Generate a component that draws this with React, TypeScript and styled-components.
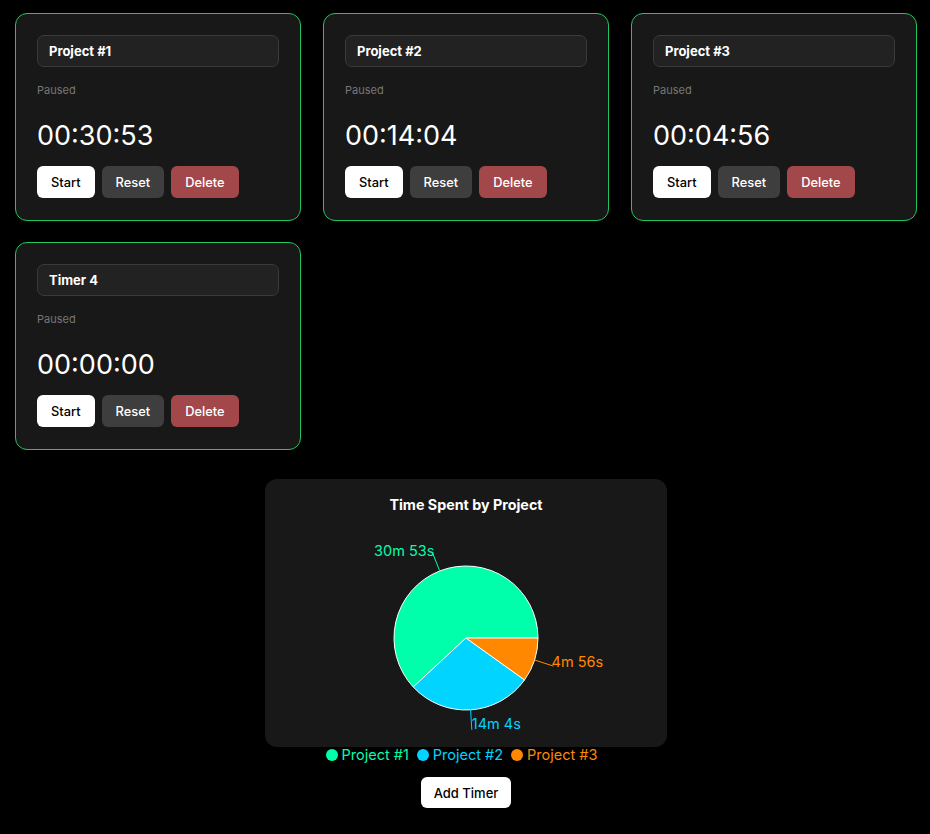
import React from "react";
import styled, { createGlobalStyle } from "styled-components";

const GlobalStyle = createGlobalStyle`
  html, body { margin: 0; padding: 0; background: #000; }
  body { font-family: Inter, "Noto Sans", sans-serif; color: #fff; }
  * { box-sizing: border-box; }
`;

const Page = styled.div`
  padding: 13px 13px 20px 15px;
  display: flex;
  flex-direction: column;
  align-items: center;
`;

const Grid = styled.div`
  width: 100%;
  display: grid;
  grid-template-columns: repeat(3, 286px);
  column-gap: 22px;
  row-gap: 21px;
`;

const Card = styled.div`
  background: #181818;
  border: 1px solid #22c55e;
  border-radius: 12px;
  padding: 21px;
  display: flex;
  flex-direction: column;
  height: 208px;
`;

const NameInput = styled.div`
  height: 32px;
  width: 242px;
  border: 1px solid #3a3a3a;
  border-radius: 7px;
  background: #222;
  padding: 0 11px;
  display: flex;
  align-items: center;
  font-size: 13px;
  font-weight: 700;
  color: #fff;
`;

const Status = styled.div`
  margin-top: 16px;
  font-size: 11px;
  line-height: 14px;
  color: #777;
`;

const Clock = styled.div`
  margin-top: 22px;
  font-size: 27px;
  line-height: 34px;
  color: #fff;
  font-weight: 400;
`;

const Buttons = styled.div`
  margin-top: 13px;
  display: flex;
  gap: 7px;
`;

const Btn = styled.button<{ $variant: "light" | "dark" | "danger" }>`
  height: 32px;
  border: none;
  border-radius: 6px;
  padding: 0 14px;
  font-family: Inter, "Noto Sans", sans-serif;
  font-size: 12.85px;
  font-weight: 500;
  cursor: pointer;
  background: ${(p) =>
    p.$variant === "light" ? "#fff" : p.$variant === "dark" ? "#3e3e3e" : "#a3484a"};
  color: ${(p) => (p.$variant === "light" ? "#000" : "#fff")};
`;

const ChartCard = styled.div`
  margin-top: 29px;
  width: 402px;
  height: 268px;
  background: #181818;
  border-radius: 12px;
  padding-top: 17px;
  display: flex;
  flex-direction: column;
  align-items: center;
`;

const ChartTitle = styled.div`
  font-size: 14.3px;
  line-height: 18px;
  font-weight: 700;
  color: #fff;
`;

const Legend = styled.div`
  display: flex;
  gap: 8px;
  margin-left: -9px;
  font-size: 14.5px;
  line-height: 16px;
`;

const LegendItem = styled.div<{ $color: string }>`
  display: flex;
  align-items: center;
  gap: 4px;
  color: ${(p) => p.$color};
`;

const Dot = styled.span<{ $color: string }>`
  width: 12px;
  height: 12px;
  border-radius: 50%;
  background: ${(p) => p.$color};
`;

const AddBtn = styled.button`
  margin-top: 14px;
  height: 31px;
  width: 90px;
  border: none;
  border-radius: 6px;
  background: #fff;
  color: #000;
  font-family: Inter, "Noto Sans", sans-serif;
  font-size: 13px;
  font-weight: 500;
`;

const timers = [
  { name: "Project #1", time: "00:30:53" },
  { name: "Project #2", time: "00:14:04" },
  { name: "Project #3", time: "00:04:56" },
  { name: "Timer 4", time: "00:00:00" },
];

const slices = [
  { name: "Project #1", value: 1853, label: "30m 53s", color: "#00ffab", dx: 2, dy: -2 },
  { name: "Project #2", value: 844, label: "14m 4s", color: "#00d4ff", dx: 0, dy: -6 },
  { name: "Project #3", value: 296, label: "4m 56s", color: "#ff8800", dx: -2, dy: -5 },
];

const Pie: React.FC = () => {
  const cx = 201;
  const cy = 124;
  const r = 72;
  const total = slices.reduce((s, x) => s + x.value, 0);
  const pt = (deg: number, rad: number) => {
    const a = (deg * Math.PI) / 180;
    return [cx + rad * Math.cos(a), cy - rad * Math.sin(a)];
  };
  let start = 0;
  return (
    <svg width={402} height={233} viewBox="0 0 402 233">
      {slices.map((s) => {
        const sweep = (s.value / total) * 360;
        const end = start + sweep;
        const [x1, y1] = pt(start, r);
        const [x2, y2] = pt(end, r);
        const mid = start + sweep / 2;
        const [lx1, ly1] = pt(mid, r);
        const [lx2, ly2] = pt(mid, r + 20);
        const right = Math.cos((mid * Math.PI) / 180) >= 0;
        const large = sweep > 180 ? 1 : 0;
        const d = `M${cx},${cy} L${x1},${y1} A${r},${r} 0 ${large} 0 ${x2},${y2} Z`;
        start = end;
        return (
          <g key={s.name}>
            <path d={d} fill={s.color} stroke="#fff" strokeWidth={1} />
            <path d={`M${lx1},${ly1} L${lx2},${ly2}`} stroke={s.color} fill="none" />
            <text
              x={lx2 + s.dx}
              y={ly2 + s.dy}
              fill={s.color}
              fontSize={14.5}
              fontFamily="Inter, sans-serif"
              textAnchor={right ? "start" : "end"}
              dominantBaseline="central"
            >
              {s.label}
            </text>
          </g>
        );
      })}
    </svg>
  );
};

export default function App() {
  return (
    <>
      <GlobalStyle />
      <Page>
        <Grid>
          {timers.map((t) => (
            <Card key={t.name}>
              <NameInput>{t.name}</NameInput>
              <Status>Paused</Status>
              <Clock>{t.time}</Clock>
              <Buttons>
                <Btn $variant="light">Start</Btn>
                <Btn $variant="dark">Reset</Btn>
                <Btn $variant="danger">Delete</Btn>
              </Buttons>
            </Card>
          ))}
        </Grid>
        <ChartCard>
          <ChartTitle>Time Spent by Project</ChartTitle>
          <Pie />
        </ChartCard>
        <Legend>
          {slices.map((s) => (
            <LegendItem key={s.name} $color={s.color}>
              <Dot $color={s.color} />
              {s.name}
            </LegendItem>
          ))}
        </Legend>
        <AddBtn>Add Timer</AddBtn>
      </Page>
    </>
  );
}
